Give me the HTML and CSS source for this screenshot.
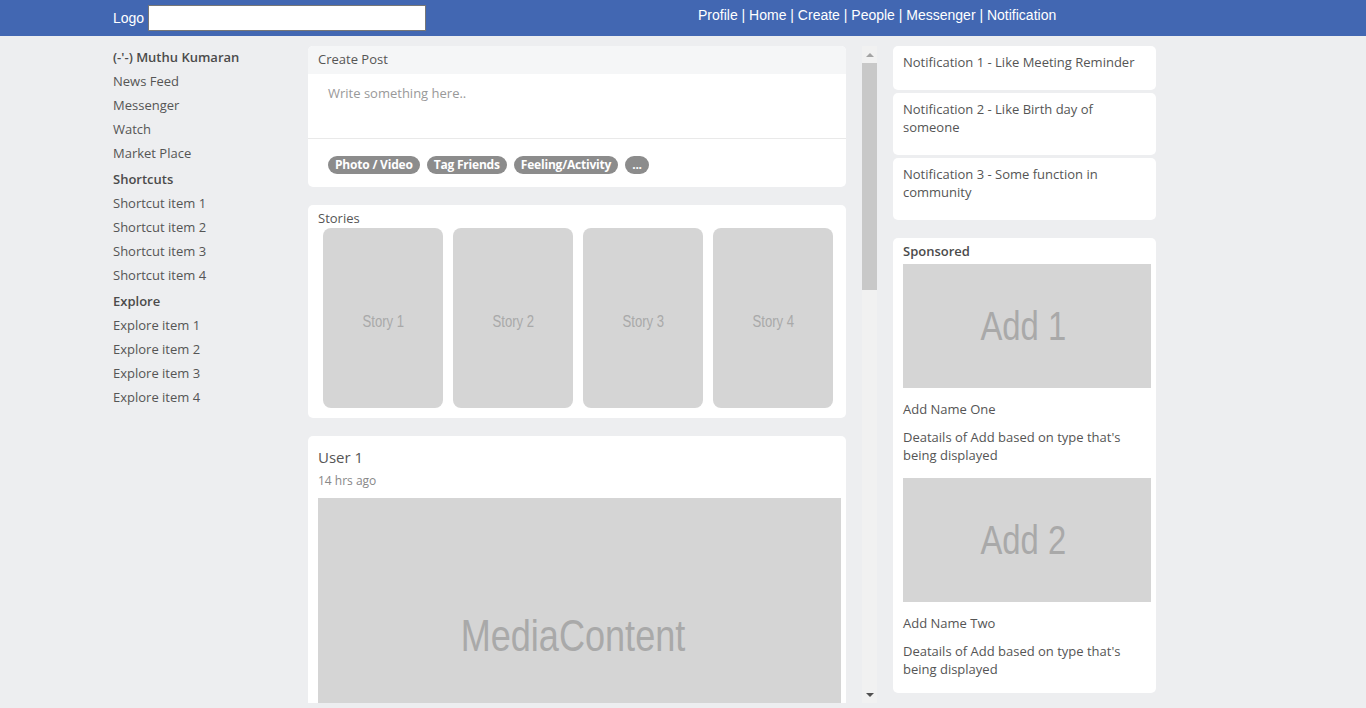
FILE: index.html
```html
<!DOCTYPE html>
<html lang="en">
<head>
    <meta charset="UTF-8">
    <meta name="viewport" content="width=device-width, initial-scale=1.0">
    <title>Facebook Layout</title>
    <link rel="stylesheet" href="styles.css">
</head>
<body>
    <div class="topbar">
        <div class="topbar-inner">
            <div class="brand">
                <span>Logo</span>
                <input class="search" type="text">
            </div>
            <div class="nav">Profile | Home | Create | People | Messenger | Notification</div>
        </div>
    </div>

    <div class="page">
        <div class="sidebar">
            <div class="side-title">(-'-) Muthu Kumaran</div>
            <div class="side-item">News Feed</div>
            <div class="side-item">Messenger</div>
            <div class="side-item">Watch</div>
            <div class="side-item">Market Place</div>
            <div class="side-title">Shortcuts</div>
            <div class="side-item">Shortcut item 1</div>
            <div class="side-item">Shortcut item 2</div>
            <div class="side-item">Shortcut item 3</div>
            <div class="side-item">Shortcut item 4</div>
            <div class="side-title">Explore</div>
            <div class="side-item">Explore item 1</div>
            <div class="side-item">Explore item 2</div>
            <div class="side-item">Explore item 3</div>
            <div class="side-item">Explore item 4</div>
        </div>

        <div class="feed">
            <div class="card create-post">
                <div class="create-head">Create Post</div>
                <textarea class="create-text" placeholder="Write something here.."></textarea>
                <div class="create-actions">
                    <span class="pill">Photo / Video</span>
                    <span class="pill">Tag Friends</span>
                    <span class="pill">Feeling/Activity</span>
                    <span class="pill">...</span>
                </div>
            </div>

            <div class="card stories">
                <div class="stories-title">Stories</div>
                <div class="story-row">
                    <div class="story"><span class="ph">Story 1</span></div>
                    <div class="story"><span class="ph">Story 2</span></div>
                    <div class="story"><span class="ph">Story 3</span></div>
                    <div class="story"><span class="ph">Story 4</span></div>
                </div>
            </div>

            <div class="card post">
                <div class="post-user">User 1</div>
                <div class="post-time">14 hrs ago</div>
                <div class="media"><span class="ph">MediaContent</span></div>
            </div>

            <div class="card post">
                <div class="post-user">User 2</div>
                <div class="post-time">16 hrs ago</div>
                <div class="media"><span class="ph">MediaContent</span></div>
            </div>
        </div>

        <div class="scrollbar">
            <div class="scroll-btn"><span class="arrow-up"></span></div>
            <div class="scroll-thumb"></div>
            <div class="scroll-track"></div>
            <div class="scroll-btn"><span class="arrow-down"></span></div>
        </div>

        <div class="rightbar">
            <div class="note">Notification 1 - Like Meeting Reminder</div>
            <div class="note">Notification 2 - Like Birth day of someone</div>
            <div class="note">Notification 3 - Some function in community</div>

            <div class="sponsored">
                <div class="sponsored-title">Sponsored</div>
                <div class="ad"><span class="ph">Add 1</span></div>
                <div class="ad-name">Add Name One</div>
                <div class="ad-info">Deatails of Add based on type that's being displayed</div>
                <div class="ad"><span class="ph">Add 2</span></div>
                <div class="ad-name">Add Name Two</div>
                <div class="ad-info">Deatails of Add based on type that's being displayed</div>
            </div>
        </div>
    </div>
</body>
</html>
```

FILE: styles.css
```css
body {
    margin: 0;
    background-color: #edeef0;
    font-family: "Open Sans", sans-serif;
    font-size: 13px;
    color: #555;
    overflow: hidden;
}
.topbar {
    background-color: #4267b2;
    height: 36px;
}
.topbar-inner {
    width: 1140px;
    margin: 0 auto;
    display: flex;
    font-family: "Liberation Sans", Arial, sans-serif;
    font-size: 14px;
    color: white;
}
.brand {
    display: flex;
    align-items: center;
    height: 36px;
    width: 585px;
    gap: 4px;
}
.search {
    width: 272px;
    height: 22px;
    border: 1px solid #777;
    padding: 1px 2px;
    margin: 0;
}
.nav {
    padding-top: 7px;
}
.page {
    width: 1140px;
    margin: 10px auto 0;
    display: flex;
}
.sidebar {
    width: 195px;
    margin-top: -1px;
}
.side-title {
    font-weight: 600;
    color: #4b4b4b;
    height: 24px;
    line-height: 24px;
    margin-top: 2px;
}
.side-title:first-child {
    margin-top: 0;
}
.side-item {
    height: 24px;
    line-height: 24px;
}

/* feed column, scrolled to the top */
.feed {
    width: 538px;
    height: 657px;
    overflow: hidden;
    margin-right: 16px;
}
.scrollbar {
    width: 15px;
    height: 657px;
    background-color: #f1f1f1;
    display: flex;
    flex-direction: column;
}
.scroll-btn {
    height: 17px;
    display: flex;
    align-items: center;
    justify-content: center;
}
.arrow-up {
    border-left: 4px solid transparent;
    border-right: 4px solid transparent;
    border-bottom: 4px solid #a3a3a3;
}
.arrow-down {
    border-left: 4px solid transparent;
    border-right: 4px solid transparent;
    border-top: 4px solid #505050;
}
.scroll-thumb {
    height: 227px;
    background-color: #c8c8c8;
}
.scroll-track {
    flex: 1;
}

.card {
    background-color: white;
    border-radius: 5px;
    margin-bottom: 18px;
}
.create-head {
    background-color: #f5f6f7;
    border-radius: 5px 5px 0 0;
    padding: 0 10px;
    height: 28px;
    line-height: 27px;
}
.create-text {
    display: block;
    width: 100%;
    box-sizing: border-box;
    height: 65px;
    border: none;
    border-bottom: 1px solid #e9e9e9;
    resize: none;
    padding: 10px 20px;
    font-family: inherit;
    font-size: 13px;
    outline: none;
}
.create-text::placeholder {
    color: #999;
}
.create-actions {
    display: flex;
    gap: 7px;
    padding: 17px 20px 13px;
}
.pill {
    background-color: #8c8c8c;
    color: white;
    font-weight: bold;
    font-size: 12px;
    letter-spacing: -0.2px;
    border-radius: 9px;
    height: 18px;
    line-height: 18px;
    padding: 0 7px;
}
.stories {
    padding: 5px 13px 10px 10px;
}
.stories-title {
    height: 18px;
    line-height: 16px;
}
.story-row {
    display: flex;
    gap: 10px;
    padding-left: 5px;
}
.ph {
    display: inline-block;
    transform: scaleX(0.82);
    font-family: "Liberation Sans", Arial, sans-serif;
    color: #a9a9a9;
}
.story {
    width: 120px;
    height: 172px;
    padding-top: 8px;
    background-color: #d5d5d5;
    border-radius: 8px;
    display: flex;
    align-items: center;
    justify-content: center;
    font-size: 16px;
}
.post {
    padding: 11px 5px 10px 10px;
}
.post-user {
    font-size: 15px;
    line-height: 20px;
}
.post-time {
    font-size: 12px;
    color: #888;
    padding-top: 5px;
    line-height: 18px;
    margin-bottom: 8px;
}
.media {
    height: 276px;
    padding-right: 13px;
    background-color: #d5d5d5;
    display: flex;
    align-items: center;
    justify-content: center;
    font-size: 44px;
}
.rightbar {
    width: 263px;
    margin-left: 16px;
}
.note {
    background-color: white;
    border-radius: 5px;
    padding: 7px 10px 19px;
    line-height: 18px;
    margin-bottom: 3px;
}
.sponsored {
    background-color: white;
    border-radius: 5px;
    margin-top: 18px;
    padding: 4px 5px 15px 10px;
}
.sponsored-title {
    font-weight: 600;
    color: #4b4b4b;
    line-height: 18px;
    margin-bottom: 4px;
}
.ad {
    height: 124px;
    padding-right: 8px;
    background-color: #d5d5d5;
    display: flex;
    align-items: center;
    justify-content: center;
    font-size: 40px;
}
.ad-name {
    line-height: 18px;
    padding: 12px 0 10px;
}
.ad-info {
    line-height: 18px;
    margin-bottom: 14px;
}
.ad-info:last-child {
    margin-bottom: 0;
}
```
